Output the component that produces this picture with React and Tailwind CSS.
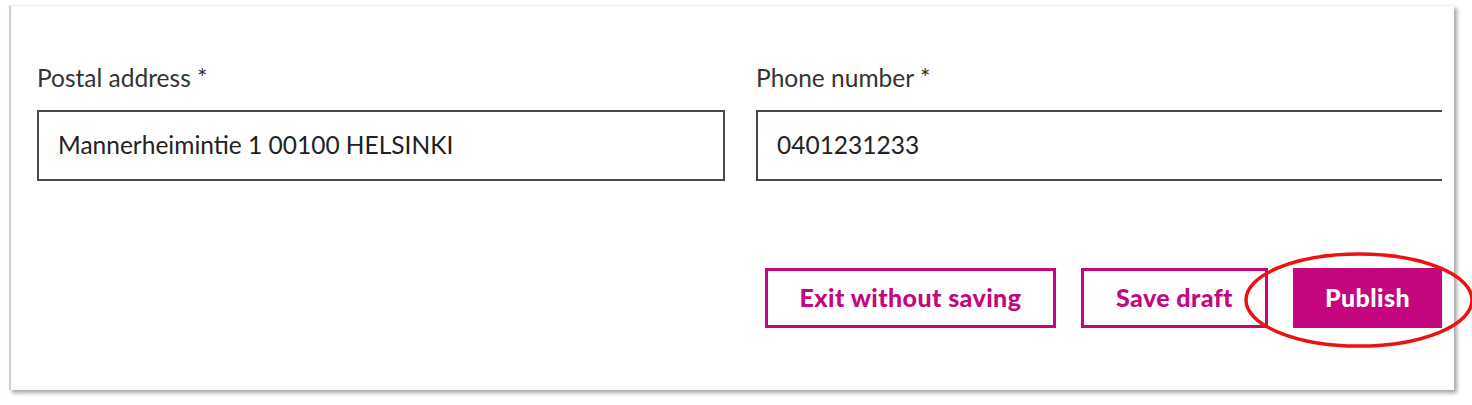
import React from 'react';

const Field = ({ label, value, className }) => (
  <div className={className}>
    <label className="block text-[24.5px] leading-[30px] text-[#333333] mb-[17px]">{label}</label>
    <div className="h-[71px] border-2 border-[#4a4a4a] flex items-center pl-[19px] text-[24.5px] text-[#222222]">
      {value}
    </div>
  </div>
);

const App = () => {
  return (
    <div className="w-[1472px] h-[405px] bg-white pt-[5px] pl-[9px] font-['Lato','Noto_Sans',sans-serif]">
      <div className="relative w-[1445px] h-[385px] bg-white border-l-2 border-t border-l-[#d0d0d0] border-t-[#ececec] shadow-[3px_3px_4px_rgba(0,0,0,0.35)]">
        <div className="w-[1431px] overflow-hidden pl-[26px] pt-[57px]">
          <div className="flex gap-[31px]">
            <Field label="Postal address *" value="Mannerheimintie 1 00100 HELSINKI" className="w-[688px] shrink-0" />
            <Field label="Phone number *" value="0401231233" className="w-[720px] shrink-0" />
          </div>
          <div className="flex justify-end gap-[25px] mt-[87px]">
            <button className="w-[291px] h-[60px] border-[3px] border-[#c4077f] text-[#c4077f] font-black text-[25px] tracking-[0.4px]">
              Exit without saving
            </button>
            <button className="w-[187px] h-[60px] border-[3px] border-[#c4077f] text-[#c4077f] font-black text-[25px] tracking-[0.4px]">
              Save draft
            </button>
            <button className="w-[149px] h-[60px] bg-[#c4077f] border-[3px] border-[#c4077f] text-white font-black text-[25px] tracking-[0.4px]">
              Publish
            </button>
          </div>
        </div>
        <svg className="absolute left-[1230px] top-[241px] pointer-events-none" width="240" height="108" viewBox="0 0 240 108">
          <ellipse cx="118" cy="53" rx="113" ry="46" fill="none" stroke="#ee1111" strokeWidth="3.5" />
        </svg>
      </div>
    </div>
  );
};

export default App;
